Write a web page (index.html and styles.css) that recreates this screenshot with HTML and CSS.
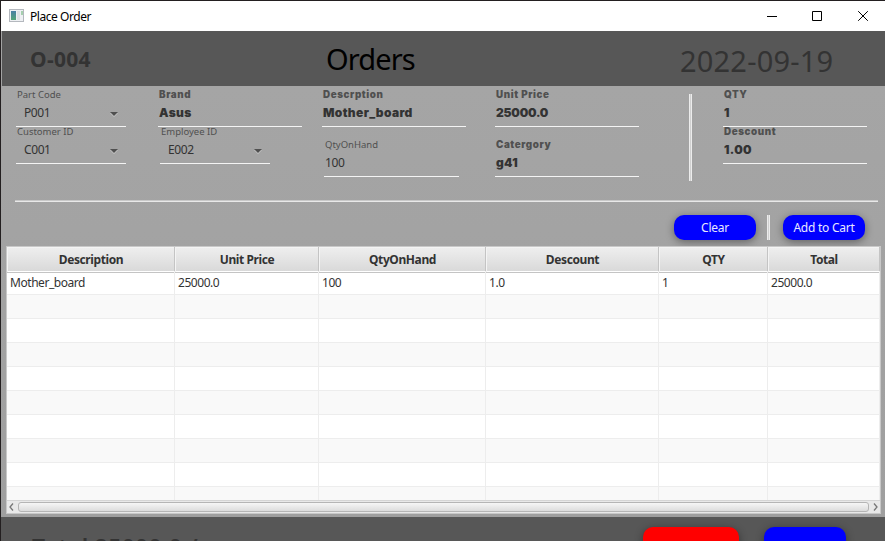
FILE: index.html
```html
<!DOCTYPE html>
<html lang="en">
<head>
<meta charset="utf-8">
<title>Place Order</title>
<link rel="stylesheet" href="styles.css">
</head>
<body>
<div class="window">
  <header class="titlebar">
    <svg class="app-icon" width="15" height="13" viewBox="0 0 15 13">
      <defs><linearGradient id="ig" x1="0" y1="0" x2="0" y2="1"><stop offset="0" stop-color="#4a7fa5"/><stop offset="1" stop-color="#55a577"/></linearGradient></defs>
      <rect x=".5" y=".5" width="14" height="12" fill="#eef0f3" stroke="#b4b8be"/>
      <rect x="2" y="2" width="5" height="9" fill="url(#ig)"/>
      <rect x="8" y="2" width="3" height="9" fill="#dfe1e4"/>
      <rect x="12" y="2" width="2" height="4" fill="#a5cfae"/>
    </svg>
    <span class="window-title">Place Order</span>
    <svg class="controls" width="102" height="11" viewBox="0 0 102 11" fill="none" stroke="#000">
      <path d="M0 5.5H10M45.5 .5h9v9h-9zM91.2 .2l9.6 9.6M100.800 .2l-9.600 9.600"/>
    </svg>
  </header>
  <section class="banner">
    <div class="order-id"><span>O-004</span></div>
    <h1><span>Orders</span></h1>
    <div class="date"><span>2022-09-19</span></div>
  </section>
  <main>
    <section class="form">
      <div class="col">
        <div class="field combo"><label>Part Code</label><b>P001</b><i class="arrow"></i></div>
        <div class="field combo"><label>Customer ID</label><b>C001</b><i class="arrow"></i></div>
      </div>
      <div class="col">
        <div class="field heavy"><label>Brand</label><b>Asus</b></div>
        <div class="field combo shifted"><label>Employee ID</label><b>E002</b><i class="arrow"></i></div>
      </div>
      <div class="col spaced">
        <div class="field heavy"><label>Descrption</label><b>Mother_board</b></div>
        <div class="field light"><label>QtyOnHand</label><b>100</b></div>
      </div>
      <div class="col spaced">
        <div class="field heavy"><label>Unit Price</label><b class="price">25000.0</b></div>
        <div class="field heavy"><label>Catergory</label><b>g41</b></div>
      </div>
      <div class="rule-v"></div>
      <div class="col">
        <div class="field heavy"><label>QTY</label><b>1</b></div>
        <div class="field heavy"><label>Descount</label><b>1.00</b></div>
      </div>
    </section>
    <div class="rule-h"></div>
    <section class="actions">
      <button>Clear</button>
      <div class="rule-v short"></div>
      <button>Add to Cart</button>
    </section>
    <section class="table">
      <div class="row head"><span>Description</span><span>Unit Price</span><span>QtyOnHand</span><span>Descount</span><span>QTY</span><span>Total</span></div>
      <div class="rows">
        <div class="row"><span>Mother_board</span><span>25000.0</span><span>100</span><span>1.0</span><span>1</span><span>25000.0</span></div>
        <div class="row"><span></span><span></span><span></span><span></span><span></span><span></span></div>
        <div class="row"><span></span><span></span><span></span><span></span><span></span><span></span></div>
        <div class="row"><span></span><span></span><span></span><span></span><span></span><span></span></div>
        <div class="row"><span></span><span></span><span></span><span></span><span></span><span></span></div>
        <div class="row"><span></span><span></span><span></span><span></span><span></span><span></span></div>
        <div class="row"><span></span><span></span><span></span><span></span><span></span><span></span></div>
        <div class="row"><span></span><span></span><span></span><span></span><span></span><span></span></div>
        <div class="row"><span></span><span></span><span></span><span></span><span></span><span></span></div>
        <div class="row"><span></span><span></span><span></span><span></span><span></span><span></span></div>
      </div>
      <div class="scrollbar">
        <svg width="5" height="8" viewBox="0 0 5 8"><path d="M4 .5L1 4l3 3.500" fill="none" stroke="#777" stroke-width="1.300"/></svg>
        <div class="thumb"></div>
        <svg width="5" height="8" viewBox="0 0 5 8"><path d="M1 .5L4 4 1 7.500" fill="none" stroke="#777" stroke-width="1.300"/></svg>
      </div>
    </section>
  </main>
  <footer>
    <div class="total">Total 25000.0 /=</div>
    <button class="danger"></button>
    <button></button>
  </footer>
</div>
</body>
</html>
```
FILE: styles.css
```css
* { box-sizing: border-box; }
body { margin: 0; width: 885px; height: 541px; overflow: hidden; font-family: "Noto Sans", sans-serif; font-size: 12px; color: #333; }
.window { height: 541px; display: flex; flex-direction: column; border: solid #231f20; border-width: 1px 0 0 1px; background: #a3a3a3; }
.titlebar { height: 30px; flex: none; background: #fff; display: flex; align-items: center; padding: 0 16px 0 8px; color: #000; }
.app-icon { margin-right: 6px; position: relative; top: -1px; }
.window-title { flex: 1; font-size: 12px; letter-spacing: -.45px; }
.banner { height: 55px; flex: none; margin-left: 1px; background: #575757; display: grid; grid-template-columns: 324px 354px 1fr; align-items: center; white-space: nowrap; }
.order-id { padding-left: 28px; font-size: 21px; font-weight: 700; letter-spacing: .3px; padding-top: 1px; }
h1 { margin: 0; font-size: 29px; font-weight: 400; color: #000; letter-spacing: -.9px; }
.date { font-size: 29px; padding-top: 4px; letter-spacing: .2px; }
main { flex: none; height: 431px; padding: 0 4px 0 5px; background: linear-gradient(#a5a5a5, #9f9f9f); }
.form { height: 114px; display: grid; grid-template-columns: 142px 164px 173px 194px 34px 144px; padding-left: 10px; }
.col { display: flex; flex-direction: column; padding-top: 4px; width: 144px; }
.spaced { gap: 13px; }
.field { height: 37px; flex: none; position: relative; border-bottom: 1px solid #f4f4f4; display: flex; flex-direction: column; padding-left: 1px; white-space: nowrap; }
label { font-size: 9.5px; line-height: 10px; color: #505050; }
.field b { font-weight: 400; line-height: 14px; margin-top: 6px; letter-spacing: -.4px; }
.combo { width: 110px; }
.combo b { padding-left: 7px; }
.shifted { margin-left: 2px; }
.arrow { position: absolute; right: 8px; top: 22px; border: 4px solid transparent; border-top-color: #505050; border-bottom: 0; filter: drop-shadow(0 1px 0 #c8c8c8); }
.heavy label, .heavy b { font-family: Inter, sans-serif; font-weight: 900; }
.heavy label { font-size: 9.8px; line-height: 10px; letter-spacing: .6px; }
.heavy b { font-size: 12px; letter-spacing: .35px; }
.heavy .price { letter-spacing: -.2px; }
.light { width: 135px; margin-left: 2px; }
.rule-v { width: 3px; height: 87px; margin-top: 8px; background: #d0d0d0; border: solid #ececec; border-width: 0 1px; }
.rule-h { height: 2px; margin: 0 3px 0 9px; background: #e8e8e8; border-top: 1px solid #c8c8c8; }
.actions { height: 44px; padding: 13px 16px 0 0; display: flex; justify-content: flex-end; }
.actions .short { height: 25px; margin: 0 13px 0 11px; }
button { width: 82px; height: 25px; border: 0; border-radius: 10px; background: #00f; color: #e8e8ff; font: 12px "Noto Sans", sans-serif; letter-spacing: -.25px; padding: 0; box-shadow: 0 2px 8px rgba(0,0,0,.4); }
.table { position: relative; height: 268px; width: 875px; border: 1px solid #c8c8c8; background: #fff; display: flex; flex-direction: column; }
.row { display: grid; grid-template-columns: 168px 144px 167px 173px 109px 112px; height: 24px; flex: none; }
.row span { border: solid #ededed; border-width: 0 1px 1px 0; padding-left: 3px; line-height: 23px; letter-spacing: -.45px; }
.row:nth-child(even) { background: #f9f9f9; }
.row.head { font-weight: 700; background: linear-gradient(#efefef, #d9d9d9); }
.row.head span { border-color: #c4c4c4; text-align: center; padding: 0 0 0 1px; line-height: 25px; letter-spacing: -.4px; box-shadow: inset 1px 1px #f4f4f4; }
.rows { flex: 1; overflow: hidden; }
.scrollbar { height: 13px; flex: none; border-top: 1px solid #d5d5d5; background: #e9e9e9; display: flex; align-items: center; gap: 4px; padding: 0 2px; }
.thumb { flex: 1; height: 10px; border: 1px solid #b5b5b5; border-radius: 3px; background: linear-gradient(#f6f6f6, #dcdcdc); }
footer { height: 24px; flex: none; overflow: hidden; background: #575757; display: flex; padding: 10px 39px 0 31px; }
.total { flex: 1; font-size: 23px; line-height: 40px; font-weight: 600; white-space: nowrap; letter-spacing: .3px; }
footer button { height: 30px; }
.danger { width: 96px; background: #f00; margin-right: 25px; }
```
